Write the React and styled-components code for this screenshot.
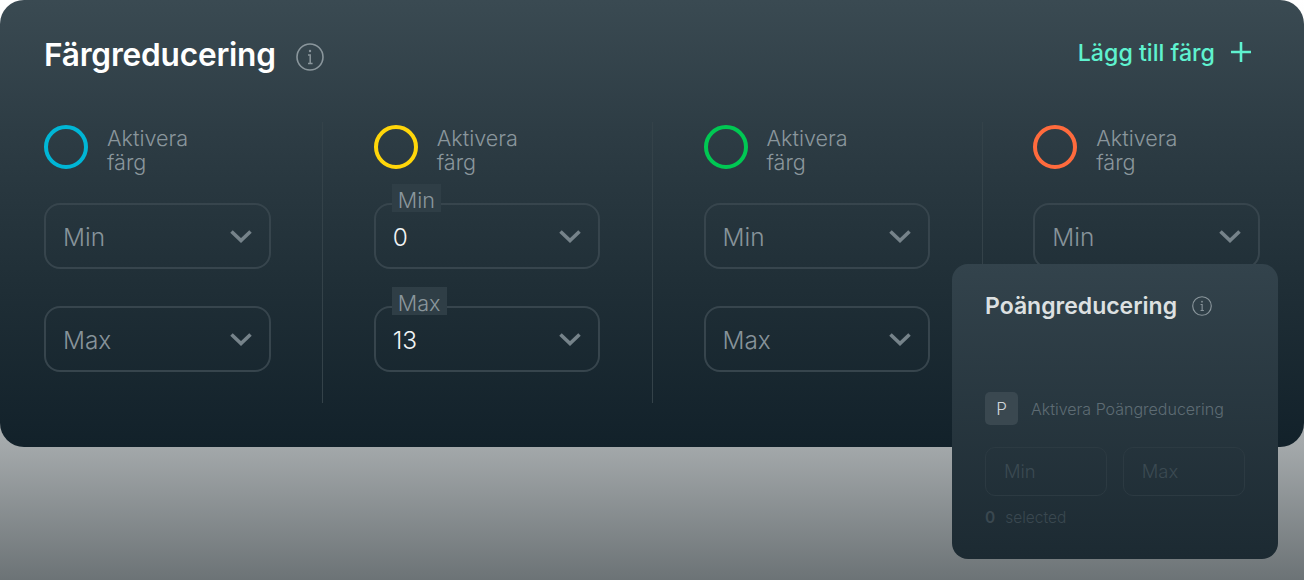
import { Fragment } from "react"
import styled, { createGlobalStyle } from "styled-components"

const GlobalStyle = createGlobalStyle`
    html, body {
        margin: 0;
        padding: 0;
    }
    body {
        width: 1304px;
        height: 580px;
        overflow: hidden;
        font-family: "Inter", "Liberation Sans", sans-serif;
        background: linear-gradient(180deg, #ffffff 0px, #e2e5e6 230px, #a3a8aa 447px, #6c7376 580px);
    }
`

const Page = styled.div`
    position: relative;
    width: 1304px;
    height: 580px;
`

const Panel = styled.section`
    box-sizing: border-box;
    width: 1304px;
    height: 447px;
    padding: 36px 44px 0;
    border-radius: 24px;
    background: linear-gradient(180deg, #3a4a52 0%, #2d3c44 30%, #1f2e36 65%, #12212a 100%);
`

const Header = styled.header`
    display: flex;
    align-items: center;
    justify-content: space-between;
    height: 36px;
    padding-right: 8px;
`

const TitleGroup = styled.div`
    display: flex;
    align-items: center;
    gap: 20px;
`

const Title = styled.h1`
    margin: 0;
    font-size: 31.6px;
    font-weight: 600;
    letter-spacing: -0.2px;
    color: #ffffff;
`

const AddButton = styled.button`
    display: flex;
    align-items: center;
    gap: 15px;
    margin-top: -5px;
    padding: 0;
    border: none;
    background: none;
    font-family: inherit;
    font-size: 23.2px;
    font-weight: 500;
    color: #5ff2cf;
`

const AddText = styled.span`
    padding-top: 2px;
`

const Columns = styled.div`
    display: flex;
    margin-top: 50px;
`

const Column = styled.div`
    display: flex;
    flex-direction: column;
    flex: none;
    width: 226.5px;
`

const Divider = styled.div`
    flex: none;
    width: 1px;
    height: 281px;
    margin: 0 50.75px 0 51.5px;
    background: #344249;
`

const Activate = styled.div`
    display: flex;
    align-items: flex-start;
    gap: 19px;
    height: 50px;
    margin-top: 3px;
    margin-bottom: 28px;
`

const Ring = styled.div`
    box-sizing: border-box;
    width: 44px;
    height: 44px;
    border-radius: 50%;
    border: 4px solid ${props => props.$color};
`

const ActivateLabel = styled.div`
    width: 90px;
    margin-top: 1px;
    font-size: 21.6px;
    font-weight: 300;
    line-height: 24px;
    color: #8a969c;
`

const Select = styled.div`
    position: relative;
    box-sizing: border-box;
    display: flex;
    align-items: center;
    justify-content: space-between;
    height: 66px;
    padding: 0 17px;
    border: 2px solid #37454d;
    border-radius: 16px;
    & + & {
        margin-top: 37px;
    }
`

const SelectText = styled.span`
    padding-top: 2px;
    font-size: 24.4px;
    font-weight: 300;
    color: ${props => props.$filled ? "#f2f4f5" : "#87939a"};
`

const FloatingLabel = styled.span`
    position: absolute;
    left: 16px;
    top: -21px;
    padding: 5px 6px 0;
    font-size: 21.6px;
    font-weight: 300;
    line-height: 23px;
    color: #8a969c;
    background: #2f3e46;
`

const Card = styled.aside`
    position: absolute;
    left: 952px;
    top: 264px;
    box-sizing: border-box;
    width: 326px;
    height: 295px;
    padding: 27px 33px 0;
    border-radius: 16px;
    background: linear-gradient(180deg, #33434c 0%, #1c2a32 100%);
`

const CardHeader = styled.div`
    display: flex;
    align-items: center;
    gap: 15px;
`

const CardTitle = styled.h2`
    margin: 0;
    font-size: 23px;
    line-height: 30px;
    font-weight: 600;
    color: #dde0e1;
`

const CardActivate = styled.div`
    display: flex;
    align-items: center;
    gap: 13px;
    margin-top: 71px;
`

const LetterBadge = styled.div`
    display: flex;
    align-items: center;
    justify-content: center;
    width: 33px;
    height: 33px;
    border-radius: 5px;
    background: #3a4850;
    font-size: 17px;
    font-weight: 300;
    color: #d0d5d8;
`

const CardActivateLabel = styled.span`
    font-size: 16px;
    font-weight: 300;
    color: #5e6c74;
`

const CardInputs = styled.div`
    display: flex;
    gap: 15.5px;
    margin-top: 22px;
`

const CardInput = styled.div`
    box-sizing: border-box;
    display: flex;
    align-items: center;
    width: 122.5px;
    height: 49px;
    padding-left: 18px;
    padding-bottom: 1px;
    border: 1.5px solid #2c3a42;
    border-radius: 10px;
    font-size: 18.4px;
    font-weight: 300;
    color: #3b4a52;
`

const Selected = styled.div`
    display: flex;
    gap: 10px;
    margin-top: 13px;
    font-size: 15.5px;
    font-weight: 300;
    line-height: 18px;
    color: #3a4850;
`

const SelectedCount = styled.span`
    font-weight: 600;
`

const InfoSvg = styled.svg`
    flex: none;
    margin-top: ${props => props.$offset}px;
`

function InfoIcon({ size, color, offset }){
    return(
        <InfoSvg $offset={offset} width={size} height={size} viewBox="0 0 28 28" fill="none" stroke={color}>
            <circle cx="14" cy="14" r="13" strokeWidth="1.6" />
            <circle cx="14" cy="8" r="1.2" fill={color} stroke="none" />
            <path d="M12 12h2.2v8.4M12 20.4h4.6" strokeWidth="1.5" />
        </InfoSvg>
    )
}

function Chevron(){
    return(
        <svg width="22" height="14" viewBox="0 0 22 14" fill="none" stroke="#76838a" strokeWidth="3.6">
            <path d="M1.5 2.5l9.5 9 9.5-9" />
        </svg>
    )
}

function Plus(){
    return(
        <svg width="22" height="22" viewBox="0 0 22 22" fill="none" stroke="#5ff2cf" strokeWidth="2.6">
            <path d="M11 1v20M1 11h20" />
        </svg>
    )
}

function ColorSelect({ label, value }){
    return(
        <Select>
            {value !== undefined && <FloatingLabel>{label}</FloatingLabel>}
            <SelectText $filled={value !== undefined}>{value !== undefined ? value : label}</SelectText>
            <Chevron />
        </Select>
    )
}

const colors = [
    { ring: "#00b6d6" },
    { ring: "#ffd60a", min: "0", max: "13" },
    { ring: "#00c853" },
    { ring: "#ff6b3d" },
]

export default function App(){
    return(
        <Page>
            <GlobalStyle />
            <Panel>
                <Header>
                    <TitleGroup>
                        <Title>Färgreducering</Title>
                        <InfoIcon size={28} color="#8a969c" offset={6} />
                    </TitleGroup>
                    <AddButton>
                        <AddText>Lägg till färg</AddText>
                        <Plus />
                    </AddButton>
                </Header>
                <Columns>
                    {colors.map((color, index) => (
                        <Fragment key={color.ring}>
                            {index > 0 && <Divider />}
                            <Column>
                                <Activate>
                                    <Ring $color={color.ring} />
                                    <ActivateLabel>Aktivera färg</ActivateLabel>
                                </Activate>
                                <ColorSelect label="Min" value={color.min} />
                                <ColorSelect label="Max" value={color.max} />
                            </Column>
                        </Fragment>
                    ))}
                </Columns>
            </Panel>
            <Card>
                <CardHeader>
                    <CardTitle>Poängreducering</CardTitle>
                    <InfoIcon size={20} color="#8a969c" offset={0} />
                </CardHeader>
                <CardActivate>
                    <LetterBadge>P</LetterBadge>
                    <CardActivateLabel>Aktivera Poängreducering</CardActivateLabel>
                </CardActivate>
                <CardInputs>
                    <CardInput>Min</CardInput>
                    <CardInput>Max</CardInput>
                </CardInputs>
                <Selected>
                    <SelectedCount>0</SelectedCount>
                    <span>selected</span>
                </Selected>
            </Card>
        </Page>
    )
}
